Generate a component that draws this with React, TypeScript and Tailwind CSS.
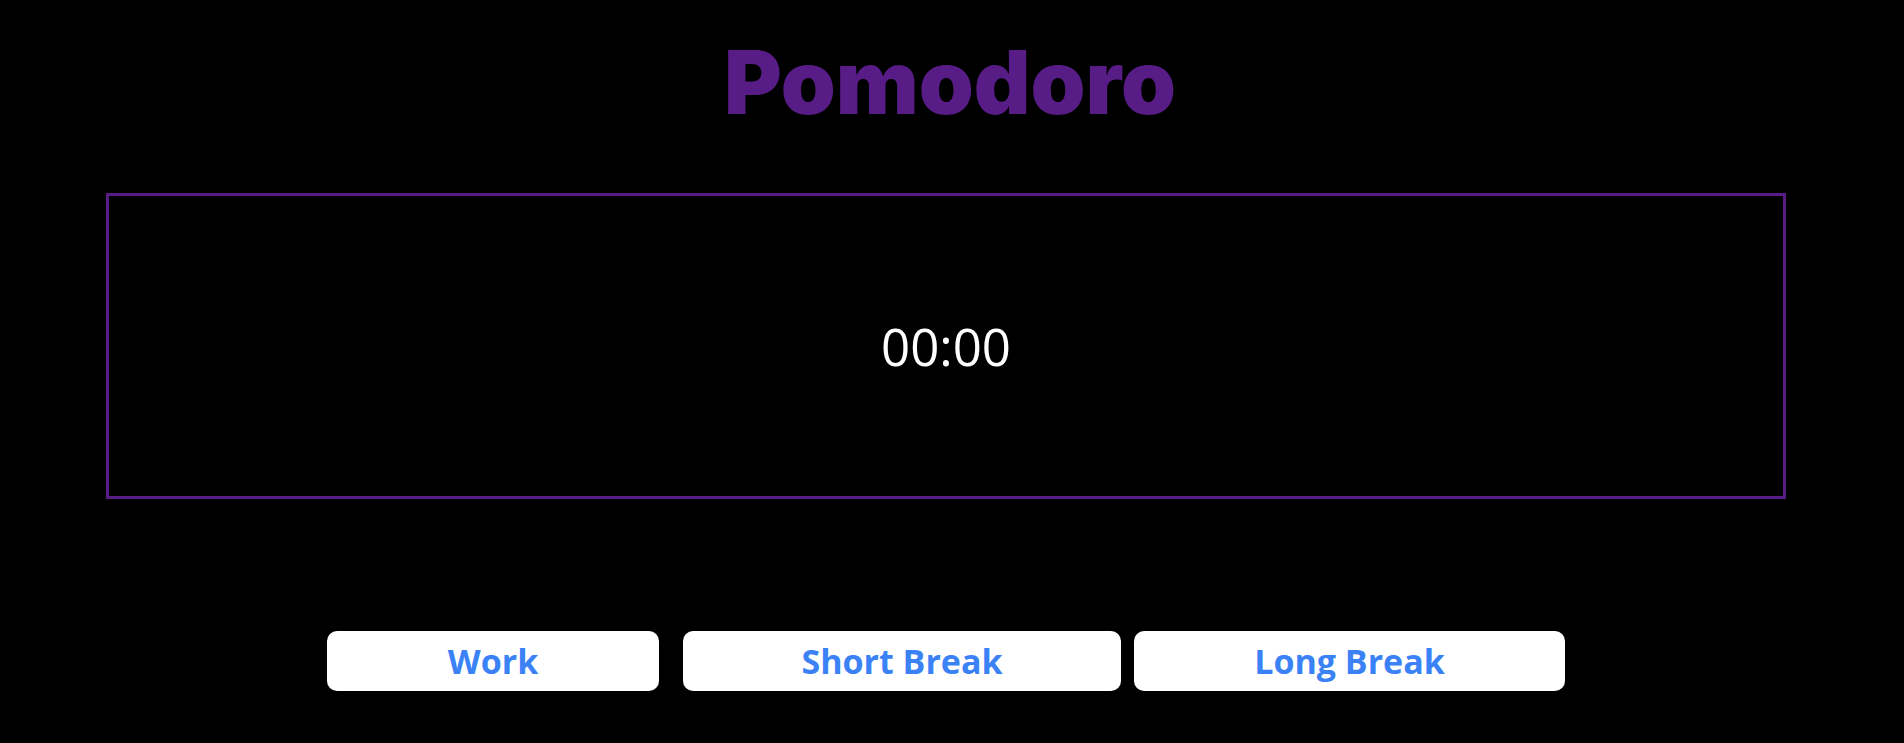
export default function App() {
  const modes = [
    { label: "Work", width: "w-[332px]", gap: "" },
    { label: "Short Break", width: "w-[438px]", gap: "ml-[24px]" },
    { label: "Long Break", width: "w-[431px]", gap: "ml-[13px]" },
  ];

  return (
    <main className="min-h-screen w-full bg-black font-['Open_Sans',sans-serif]">
      <div className="flex w-[1892px] flex-col items-center">
        <h1 className="pl-[8px] pt-[38px] font-['Inter',sans-serif] text-[88px] font-black leading-none text-[#581c87]">
          Pomodoro
        </h1>

        <section className="mt-[67px] flex h-[306px] w-[1680px] items-center justify-center border-[3px] border-[#581c87]">
          <p className="text-[51px] font-normal leading-none text-white">00:00</p>
        </section>

        <div className="mt-[132px] flex">
          {modes.map((m) => (
            <button
              key={m.label}
              className={`${m.width} ${m.gap} flex h-[60px] items-center justify-center rounded-[10px] bg-white text-[34px] font-bold leading-none text-[#3b82f6]`}
            >
              {m.label}
            </button>
          ))}
        </div>
      </div>
    </main>
  );
}
